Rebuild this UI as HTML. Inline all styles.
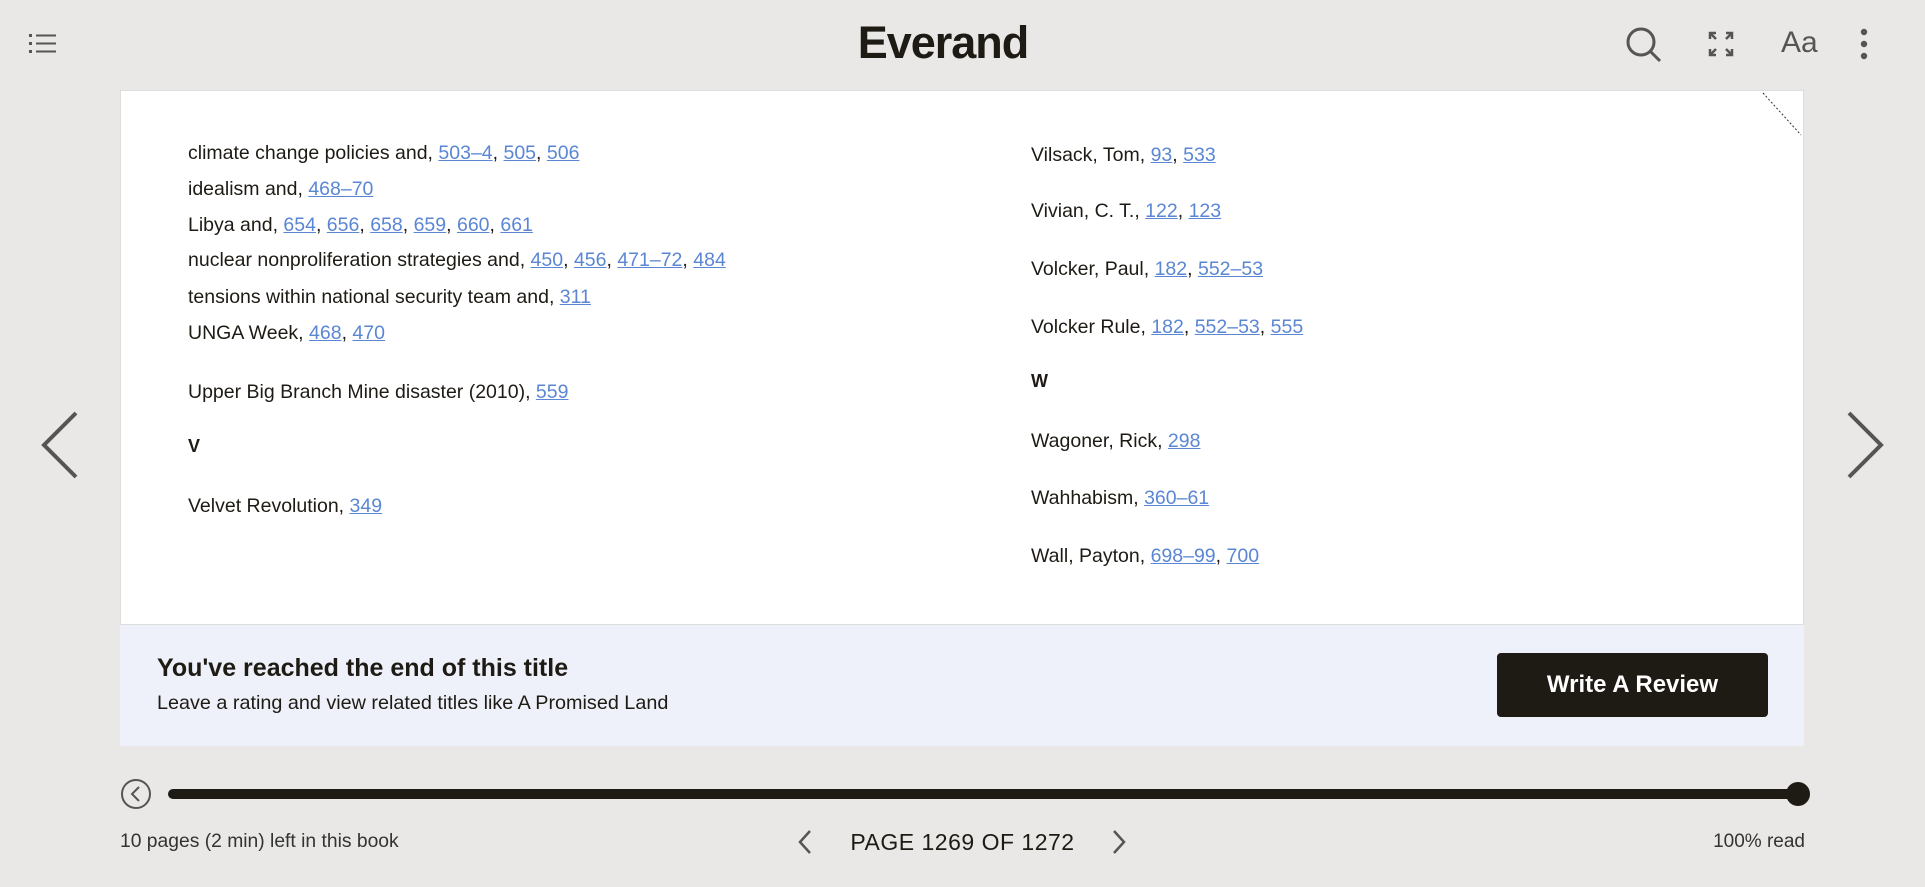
<!DOCTYPE html>
<html><head><meta charset="utf-8"><style>
*{margin:0;padding:0;box-sizing:border-box}
body{width:1925px;height:887px;background:#e9e8e6;font-family:"Liberation Sans",sans-serif;color:#1e1a14;position:relative;overflow:hidden}
.a{position:absolute;white-space:nowrap}
.page{position:absolute;left:120px;top:90px;width:1684px;height:535px;background:#fff;border:1px solid #ddd}
.t{position:absolute;font-family:"Liberation Sans",sans-serif;font-size:19.5px;line-height:24px;color:#1e1a14;white-space:nowrap}
.t a{color:#5a86d4;text-decoration:underline}
.h{font-weight:bold;font-size:18px}
</style></head><body>
<svg class="a" style="left:29px;top:33px" width="28" height="22" viewBox="0 0 28 22" fill="#555"><rect x="0" y="1" width="3" height="3"/><rect x="7" y="1.5" width="20" height="2"/><rect x="0" y="9" width="3" height="3"/><rect x="7" y="9.5" width="20" height="2"/><rect x="0" y="17" width="3" height="3"/><rect x="7" y="17.5" width="20" height="2"/></svg>
<div class="a" style="left:0;width:1886px;text-align:center;top:17px;font-size:45px;font-weight:bold;letter-spacing:-1px">Everand</div>
<svg class="a" style="left:1625px;top:26px" width="38" height="38" viewBox="0 0 38 38" fill="none" stroke="#555" stroke-width="3"><circle cx="16" cy="16" r="13"/><line x1="25" y1="25" x2="35" y2="35"/></svg>
<svg class="a" style="left:1708px;top:31px" width="26" height="26" viewBox="0 0 26 26" fill="none" stroke="#555" stroke-width="2.5"><path d="M2 8V2h6M2 2l6 6M18 2h6v6M24 2l-6 6M2 18v6h6M2 24l6-6M18 24h6v-6M24 24l-6-6"/></svg>
<div class="a" style="left:1781px;top:26px;font-size:30px;color:#555">Aa</div>
<svg class="a" style="left:1859px;top:28px" width="10" height="32" fill="#555"><circle cx="5" cy="4" r="3.2"/><circle cx="5" cy="16" r="3.2"/><circle cx="5" cy="28" r="3.2"/></svg>
<svg class="a" style="left:40px;top:409px" width="40" height="72" fill="none" stroke="#555" stroke-width="4"><path d="M36 4L4 36l32 32"/></svg>
<svg class="a" style="left:1845px;top:409px" width="40" height="72" fill="none" stroke="#555" stroke-width="4"><path d="M4 4l32 32L4 68"/></svg>
<div class="page">
<svg class="a" style="right:0;top:0" width="48" height="48"><line x1="8" y1="2" x2="46" y2="44" stroke="#333" stroke-dasharray="2 2"/></svg>
</div>
<div class="t" style="left:188px;top:141px">climate change policies and, <a>503–4</a>, <a>505</a>, <a>506</a></div>
<div class="t" style="left:188px;top:177px">idealism and, <a>468–70</a></div>
<div class="t" style="left:188px;top:213px">Libya and, <a>654</a>, <a>656</a>, <a>658</a>, <a>659</a>, <a>660</a>, <a>661</a></div>
<div class="t" style="left:188px;top:248px">nuclear nonproliferation strategies and, <a>450</a>, <a>456</a>, <a>471–72</a>, <a>484</a></div>
<div class="t" style="left:188px;top:285px">tensions within national security team and, <a>311</a></div>
<div class="t" style="left:188px;top:321px">UNGA Week, <a>468</a>, <a>470</a></div>
<div class="t" style="left:188px;top:380px">Upper Big Branch Mine disaster (2010), <a>559</a></div>
<div class="t h" style="left:188px;top:434px">V</div>
<div class="t" style="left:188px;top:494px">Velvet Revolution, <a>349</a></div>
<div class="t" style="left:1031px;top:143px">Vilsack, Tom, <a>93</a>, <a>533</a></div>
<div class="t" style="left:1031px;top:199px">Vivian, C. T., <a>122</a>, <a>123</a></div>
<div class="t" style="left:1031px;top:257px">Volcker, Paul, <a>182</a>, <a>552–53</a></div>
<div class="t" style="left:1031px;top:315px">Volcker Rule, <a>182</a>, <a>552–53</a>, <a>555</a></div>
<div class="t h" style="left:1031px;top:369px">W</div>
<div class="t" style="left:1031px;top:429px">Wagoner, Rick, <a>298</a></div>
<div class="t" style="left:1031px;top:486px">Wahhabism, <a>360–61</a></div>
<div class="t" style="left:1031px;top:544px">Wall, Payton, <a>698–99</a>, <a>700</a></div>
<div class="a" style="left:120px;top:625px;width:1684px;height:121px;background:#eef1f9"></div>
<div class="a" style="left:157px;top:654px;font-size:25px;font-weight:bold">You've reached the end of this title</div>
<div class="a" style="left:157px;top:692px;font-size:19.8px">Leave a rating and view related titles like A Promised Land</div>
<div class="a" style="left:1497px;top:653px;width:271px;height:64px;background:#1e1a14;border-radius:4px;color:#fff;font-size:24px;font-weight:bold;text-align:center;line-height:64px">Write A Review</div>
<svg class="a" style="left:120px;top:778px" width="1700" height="32"><circle cx="16" cy="16" r="14" fill="none" stroke="#555" stroke-width="2"/><path d="M19 9l-7 7 7 7" fill="none" stroke="#555" stroke-width="2"/><rect x="48" y="11" width="1632" height="10" rx="5" fill="#1e1a14"/><circle cx="1678" cy="16" r="12" fill="#1e1a14"/></svg>
<div class="a" style="left:120px;top:831px;font-size:19.3px;color:#333">10 pages (2 min) left in this book</div>
<div class="a" style="left:0;width:1925px;text-align:center;top:829px;font-size:23px;letter-spacing:0.5px">PAGE 1269 OF 1272</div>
<svg class="a" style="left:797px;top:829px" width="16" height="26" fill="none" stroke="#555" stroke-width="2.5"><path d="M13 2L3 13l10 11"/></svg>
<svg class="a" style="left:1111px;top:829px" width="16" height="26" fill="none" stroke="#555" stroke-width="2.5"><path d="M3 2l10 11L3 24"/></svg>
<div class="a" style="right:120px;top:831px;font-size:19px;color:#333">100% read</div>
</body></html>
